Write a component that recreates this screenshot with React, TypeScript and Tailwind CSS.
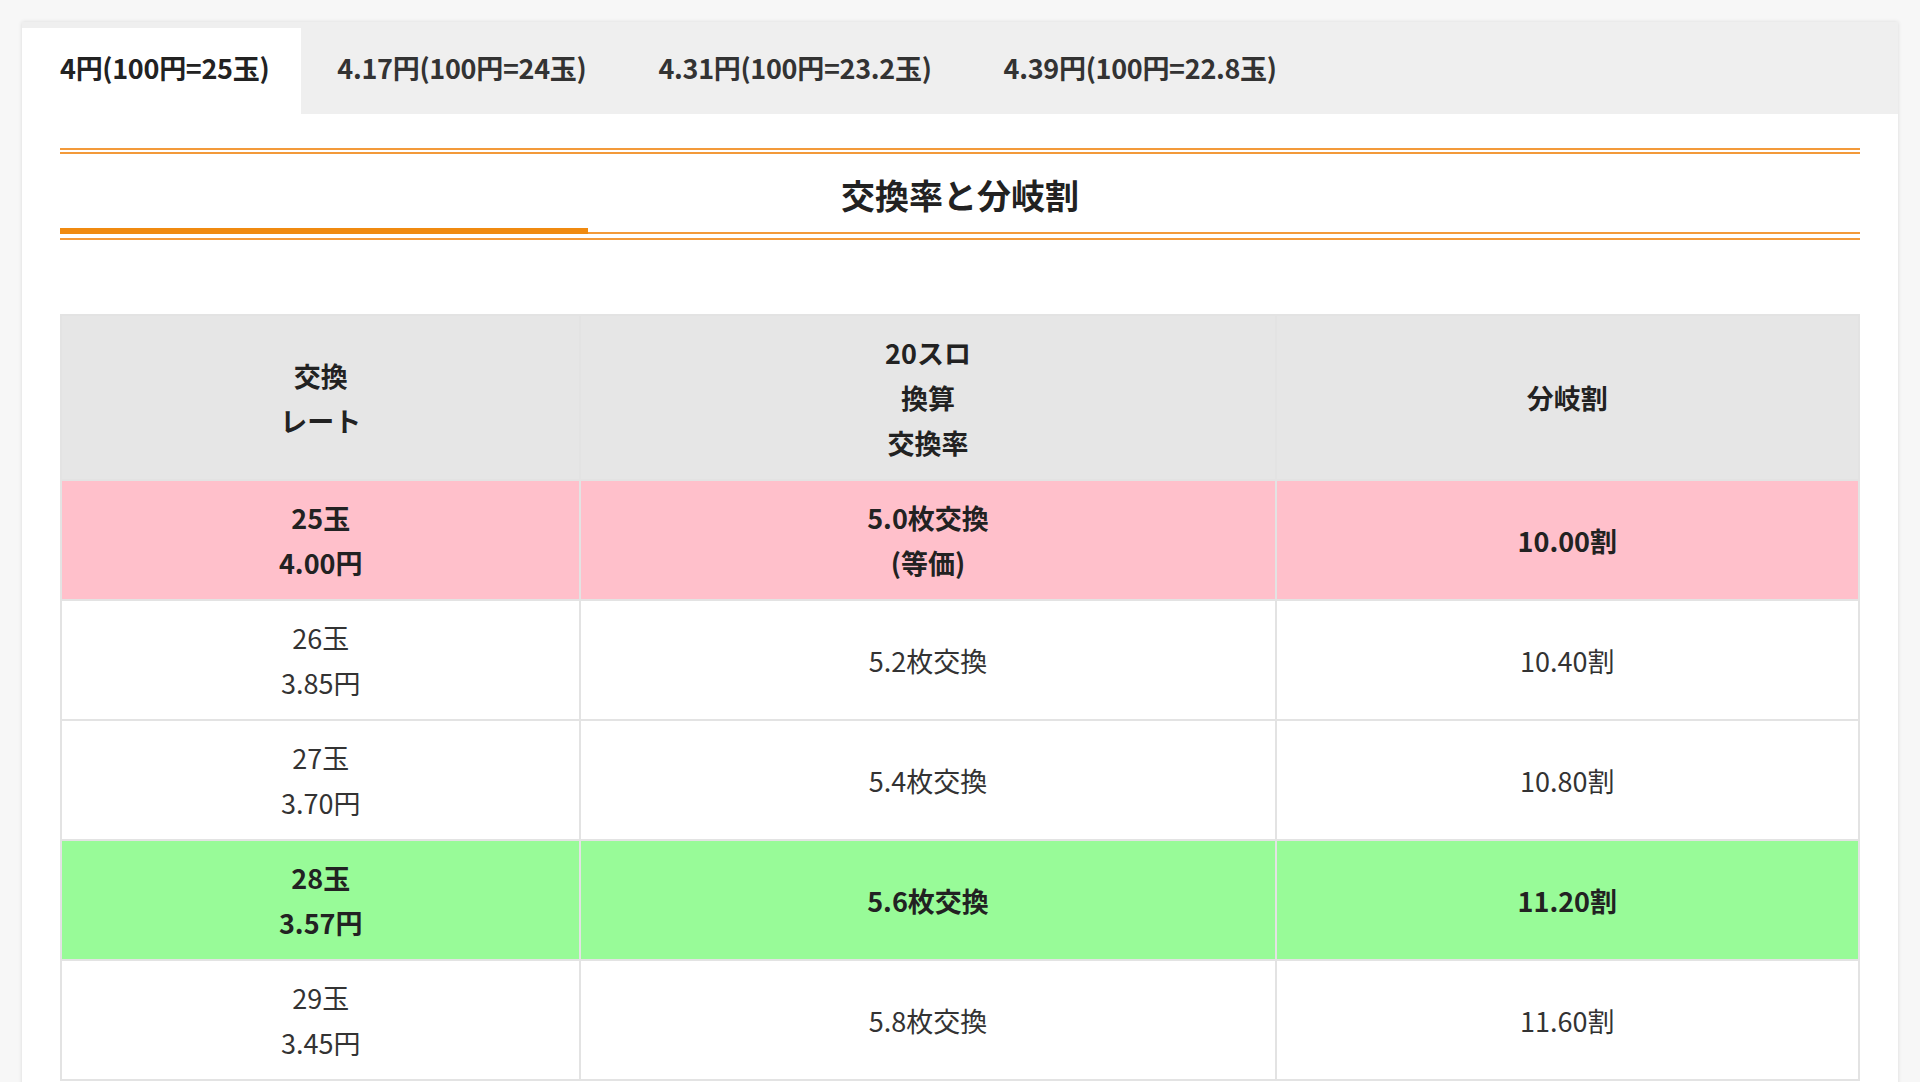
import React from "react";

const tabs = ["4円(100円=25玉)", "4.17円(100円=24玉)", "4.31円(100円=23.2玉)", "4.39円(100円=22.8玉)"];

const rows = [
  { a: ["25玉", "4.00円"], b: ["5.0枚交換", "(等価)"], c: "10.00割", bg: "bg-[#ffc0cb]", bold: true },
  { a: ["26玉", "3.85円"], b: ["5.2枚交換"], c: "10.40割", bg: "bg-white", bold: false },
  { a: ["27玉", "3.70円"], b: ["5.4枚交換"], c: "10.80割", bg: "bg-white", bold: false },
  { a: ["28玉", "3.57円"], b: ["5.6枚交換"], c: "11.20割", bg: "bg-[#98fb98]", bold: true },
  { a: ["29玉", "3.45円"], b: ["5.8枚交換"], c: "11.60割", bg: "bg-white", bold: false },
];

const Cell: React.FC<{ lines: string[]; className?: string }> = ({ lines, className }) => (
  <td className={`border-2 border-[#e3e3e3] text-center align-middle ${className ?? ""}`}>
    {lines.map((l) => (
      <div key={l}>{l}</div>
    ))}
  </td>
);

const App: React.FC = () => {
  return (
    <div
      className="w-[1920px] h-[1082px] overflow-hidden bg-[#f7f7f7] pt-[22px] pl-[22px] text-[#222]"
      style={{ fontFamily: '"Noto Sans CJK JP", "Noto Sans", sans-serif' }}
    >
      <div className="w-[1876px] h-[1100px] bg-white shadow-[0_0_4px_rgba(0,0,0,0.12)]">
        <div className="flex h-[92px] bg-[#efefef]">
          {tabs.map((t, i) => (
            <div
              key={t}
              className={`flex items-center text-[27px] font-bold tracking-[-0.3px] ${
                i === 0 ? "bg-white pl-[38px] pr-[32px] mt-[6px] pb-[6px]" : "px-[36px] text-[#333]"
              }`}
            >
              {t}
            </div>
          ))}
        </div>
        <div className="px-[38px]">
          <div className="mt-[34px] h-[6px] border-t-2 border-b-2 border-[#f39a3a]" />
          <h2 className="text-center text-[34px] font-bold leading-[46px] mt-[18px] mb-[14px]">交換率と分岐割</h2>
          <div className="relative h-[8px] border-t-2 border-b-2 border-[#f39a3a]">
            <div className="absolute left-0 -top-[6px] w-[528px] h-[6px] bg-[#f08a10]" />
          </div>
          <table className="mt-[74px] w-[1800px] border-collapse text-[27px] leading-[45px]">
            <colgroup>
              <col className="w-[520px]" />
              <col className="w-[696px]" />
              <col className="w-[584px]" />
            </colgroup>
            <thead>
              <tr className="h-[165px] bg-[#e6e6e6] font-bold">
                <Cell lines={["交換", "レート"]} />
                <Cell lines={["20スロ", "換算", "交換率"]} />
                <Cell lines={["分岐割"]} />
              </tr>
            </thead>
            <tbody>
              {rows.map((r) => (
                <tr key={r.c} className={`h-[120px] ${r.bg} ${r.bold ? "font-bold" : "text-[#333]"}`}>
                  <Cell lines={r.a} />
                  <Cell lines={r.b} />
                  <Cell lines={[r.c]} />
                </tr>
              ))}
            </tbody>
          </table>
        </div>
      </div>
    </div>
  );
};

export default App;
